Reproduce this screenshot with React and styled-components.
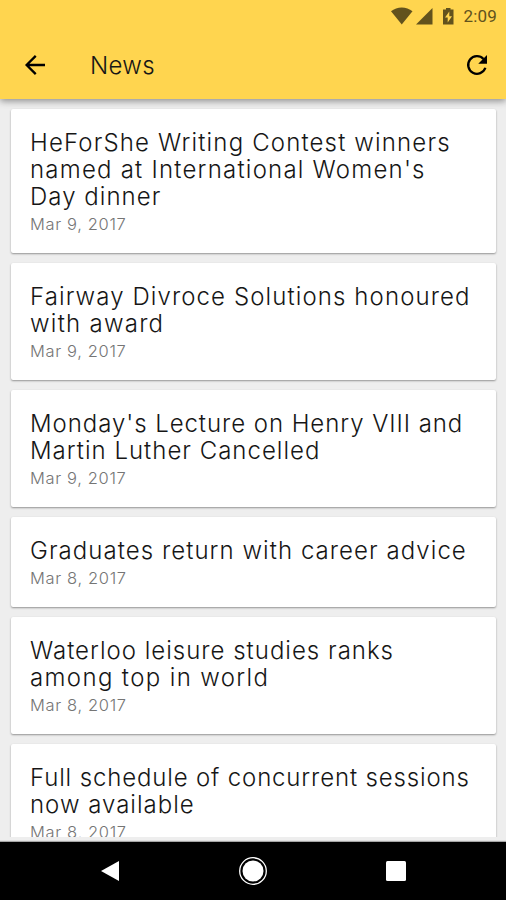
import React from 'react'
import styled, { createGlobalStyle, ThemeProvider } from 'styled-components'

const theme = {
  yellow: '#ffd54f',
  background: '#eeeeee',
  white: '#ffffff',
  black: '#000000',
  text: '#161616',
  grey: '#757575',
  status: '#62521d',
}

const GlobalStyle = createGlobalStyle`
  * {
    box-sizing: border-box;
  }

  body {
    margin: 0;
    overflow: hidden;
    font-family: Inter, "Liberation Sans", sans-serif;
  }
`

const Screen = styled.div`
  width: 506px;
  height: 900px;
  display: flex;
  flex-direction: column;
  background-color: ${props => props.theme.background};
`

const Header = styled.header`
  height: 99px;
  flex-shrink: 0;
  z-index: 1;
  background-color: ${props => props.theme.yellow};
  box-shadow: 0 2px 7px rgba(0, 0, 0, .42);
`

const StatusBar = styled.div`
  height: 31px;
  display: flex;
  justify-content: flex-end;
  align-items: center;
  padding-right: 9px;
  color: ${props => props.theme.status};

  svg {
    display: block;
  }
`

const Clock = styled.span`
  margin-left: 9px;
  font-family: Roboto, sans-serif;
  font-size: 17px;
  line-height: 31px;
  padding-top: 1px;
  letter-spacing: .15px;
`

const Toolbar = styled.div`
  height: 68px;
  display: flex;
  align-items: center;
  padding: 0 14px 0 20px;
`

const IconButton = styled.button`
  display: flex;
  padding: 0;
  border: 0;
  background: none;
  color: ${props => props.theme.black};
  cursor: pointer;
`

const PageTitle = styled.h1`
  flex: 1;
  margin: 0 0 0 40px;
  font-size: 24px;
  font-weight: 300;
  letter-spacing: .3px;
  color: ${props => props.theme.text};
`

const List = styled.main`
  height: 738px;
  flex-shrink: 0;
  display: flex;
  flex-direction: column;
  gap: 10px;
  padding: 10px 10px 0 11px;
  overflow: hidden;
`

const Card = styled.article`
  flex-shrink: 0;
  padding: 20px 19px 17px;
  border-radius: 2px;
  background-color: ${props => props.theme.white};
  box-shadow: 0 1px 2px rgba(0, 0, 0, .38);
`

const Headline = styled.h2`
  margin: 0;
  font-size: 24px;
  font-weight: 300;
  line-height: 27px;
  color: ${props => props.theme.text};
`

const Line = styled.span`
  display: block;
  white-space: nowrap;
  letter-spacing: ${props => props.$tracking}px;
`

const PostDate = styled.div`
  padding-top: 2px;
  font-size: 16.5px;
  font-weight: 300;
  line-height: 24px;
  letter-spacing: .65px;
  color: ${props => props.theme.grey};
`

const NavBar = styled.nav`
  flex: 1;
  margin-top: 5px;
  display: flex;
  justify-content: center;
  align-items: center;
  gap: 119px;
  background-color: ${props => props.theme.black};
  box-shadow: 0 -1px 1px rgba(0, 0, 0, .3);

  svg {
    display: block;
    fill: ${props => props.theme.white};
  }
`

// each headline line is [text, letter spacing]
const news = [
  {
    lines: [
      ["HeForShe Writing Contest winners", 1.15],
      ["named at International Women's", 1.22],
      ["Day dinner", 1.04],
    ],
    date: "Mar 9, 2017",
  },
  {
    lines: [["Fairway Divroce Solutions honoured", 1.1], ["with award", 1.25]],
    date: "Mar 9, 2017",
  },
  {
    lines: [["Monday's Lecture on Henry VIII and", .94], ["Martin Luther Cancelled", 1]],
    date: "Mar 9, 2017",
  },
  {
    lines: [["Graduates return with career advice", 1.05]],
    date: "Mar 8, 2017",
  },
  {
    lines: [["Waterloo leisure studies ranks", 1], ["among top in world", 1.36]],
    date: "Mar 8, 2017",
  },
  {
    lines: [["Full schedule of concurrent sessions", .85], ["now available", 1]],
    date: "Mar 8, 2017",
  },
]

const StatusIcons = () => (
  <svg width="64" height="18" viewBox="0 0 64 18" fill="currentColor">
    <path d="M0 4.2C6-.9 15.500-.9 21.500 4.200L10.750 17.500z" />
    <path d="M41.500 1V17.500H25z" />
    <path
      fillRule="evenodd"
      d="M55 1h4.500v1.500h3V17.500h-10.500V2.500h3zM58.300 4.500L54 10.500h2.700V15.500L61 9.200h-2.700z"
    />
  </svg>
)

const BackIcon = () => (
  <svg width="30" height="30" viewBox="0 0 24 24" fill="none" stroke="currentColor" strokeWidth="1.85">
    <path d="M20 12H5M12.600 4.700L5.300 12l7.300 7.300" />
  </svg>
)

const RefreshIcon = () => (
  <svg width="30" height="30" viewBox="0 0 24 24">
    <path
      d="M18.700 14.200A7.050 7.050 0 1 1 17.200 7.200"
      fill="none"
      stroke="currentColor"
      strokeWidth="1.850"
    />
    <path d="M20 4v7h-7z" fill="currentColor" />
  </svg>
)

const NewsCard = ({ lines, date }) => (
  <Card>
    <Headline>
      {lines.map(([text, tracking]) => (
        <Line key={text} $tracking={tracking}>{text}</Line>
      ))}
    </Headline>
    <PostDate>{date}</PostDate>
  </Card>
)

const App = () => {
  return (
    <ThemeProvider theme={theme}>
      <GlobalStyle />
      <Screen>
        <Header>
          <StatusBar>
            <StatusIcons />
            <Clock>2:09</Clock>
          </StatusBar>
          <Toolbar>
            <IconButton aria-label="Back"><BackIcon /></IconButton>
            <PageTitle>News</PageTitle>
            <IconButton aria-label="Refresh"><RefreshIcon /></IconButton>
          </Toolbar>
        </Header>
        <List>
          {news.map(item => <NewsCard key={item.lines[0][0]} {...item} />)}
        </List>
        <NavBar>
          <svg width="20" height="20" viewBox="0 0 20 20">
            <path d="M1 10L19 0V20z" />
          </svg>
          <svg width="28" height="28" viewBox="0 0 28 28">
            <circle cx="14" cy="14" r="13.300" fill="none" stroke="#fff" strokeWidth="1.300" />
            <circle cx="14" cy="14" r="10.500" />
          </svg>
          <svg width="20" height="20" viewBox="0 0 20 20">
            <rect width="20" height="20" rx="1.500" />
          </svg>
        </NavBar>
      </Screen>
    </ThemeProvider>
  )
}

export default App
